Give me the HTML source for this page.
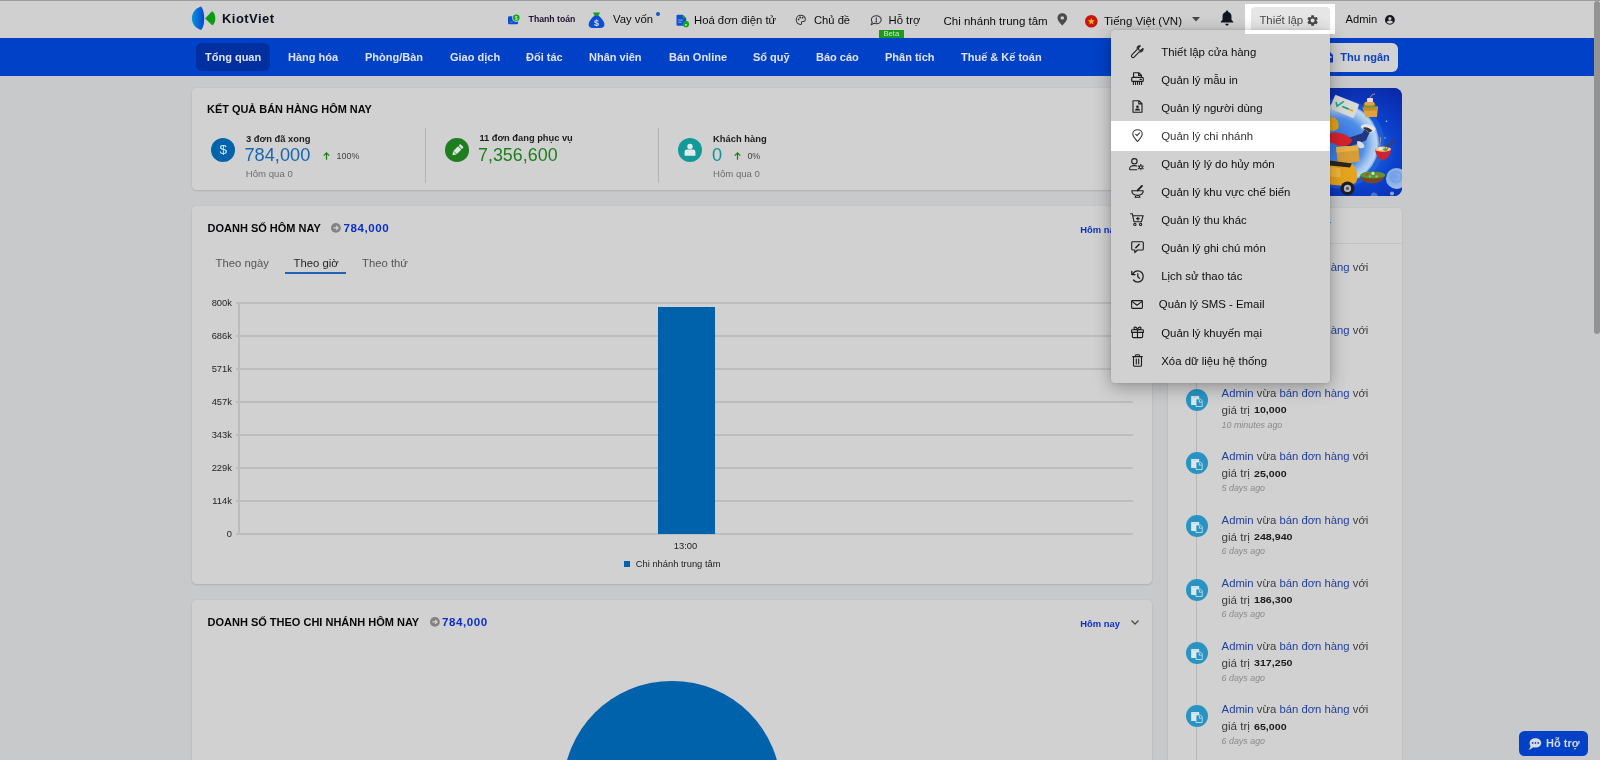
<!DOCTYPE html>
<html lang="vi">
<head>
<meta charset="utf-8">
<title>KiotViet - Tổng quan</title>
<style>
*{box-sizing:border-box;margin:0;padding:0}
html,body{width:1600px;height:760px;overflow:hidden}
body{position:relative;background:#c8c9cb;font-family:"Liberation Sans",sans-serif;color:#0c0c0e;font-size:12px}
.a{position:absolute}
.t{position:absolute;white-space:nowrap;line-height:1}
.b{font-weight:bold}
svg{position:absolute;overflow:visible}
/* header */
#topline{left:0;top:0;width:1600px;height:1px;background:#9c9c9c}
#header{left:0;top:1px;width:1600px;height:37px;background:#d0d0d0}
#nav{left:0;top:38px;width:1600px;height:38px;background:#0041c8}
#nav .t{color:#dfe3ee;font-weight:bold;font-size:11px;top:13.5px}
#navact{left:196px;top:5px;width:74px;height:28px;border-radius:6px;background:#002f9f}
.card{position:absolute;background:#d1d1d1;border-radius:4.5px;box-shadow:0 1px 2px rgba(0,0,0,.12),0 0 2px rgba(0,0,0,.07)}
.h{font-size:12px;color:#16181c}
</style>
</head>
<body>
<div id="root" style="position:absolute;left:0;top:0;width:1600px;height:760px;overflow:hidden;will-change:transform">
<div class="a" id="header"></div>
<div class="a" id="topline"></div>

<!-- header content -->
<svg style="left:191px;top:5px" width="26" height="27" viewBox="0 0 26 27">
  <defs><linearGradient id="lg" x1="0" y1="0" x2="1" y2="0"><stop offset="0" stop-color="#0b93d4"/><stop offset="1" stop-color="#0046d8"/></linearGradient></defs>
  <path d="M10.2 1.4 C12.6 5 13.2 9 13.2 13.4 C13.2 17.8 12.6 21.6 10.2 25 C4.6 23.4 0.9 19 0.9 13.2 C0.9 7.6 4.6 3 10.2 1.4Z" fill="url(#lg)"/>
  <path d="M14.1 13.5 L21 6.3 C22.4 6.6 24.3 9.6 24.3 13.4 C24.3 17 22.6 19.8 21.2 20.3 Z" fill="#0d9b12"/>
</svg>
<div class="t b" id="brand" style="left:222px;top:12px;font-size:13px;letter-spacing:0.45px;color:#0c1020">KiotViet</div>

<svg style="left:508px;top:13px" width="14" height="12" viewBox="0 0 14 12"><rect x="0" y="3.300" width="10.100" height="7.900" rx="1.200" fill="#0b4fd0"/><rect x="1.800" y="8.700" width="3" height="0.800" fill="#5f90e6"/><circle cx="8.300" cy="4.800" r="4.100" fill="#d0d0d0"/><circle cx="8.300" cy="4.800" r="3.250" fill="#12a516"/><text x="8.300" y="6.500" font-size="4.600" font-weight="bold" fill="#cfeccf" text-anchor="middle" font-family="Liberation Sans,sans-serif">$</text></svg>
<div class="t b" id="h1" style="left:528.600px;top:14.800px;font-size:8.7px;color:#1a1030">Thanh toán</div>

<svg style="left:588.400px;top:11.500px" width="17" height="17" viewBox="0 0 17 17"><path d="M5 0.500 H12 L10.300 3.800 H6.700 Z" fill="#0fa412"/><path d="M6.700 3.500 H10.300 C13.500 5.900 16.400 9.800 16.400 12.500 C16.400 14.800 15 15.900 12.400 15.900 H4.600 C2 15.900 0.600 14.800 0.600 12.500 C0.600 9.800 3.500 5.900 6.700 3.500Z" fill="#0b4ed4"/><text x="8.500" y="13.600" font-size="9" font-weight="bold" fill="#d9dfee" text-anchor="middle" font-family="Liberation Sans,sans-serif">$</text></svg>
<div class="t" id="h2" style="left:613px;top:13.5px;font-size:11.3px">Vay vốn</div>
<div class="a" style="left:656px;top:11.5px;width:4.4px;height:4.4px;border-radius:50%;background:#1457c8"></div>

<svg style="left:676px;top:14px" width="14" height="14" viewBox="0 0 14 14"><path d="M1.6 0.8 H6.6 L10.2 4.2 V10.6 Q10.2 11.8 9 11.8 H1.6 Q0.5 11.8 0.5 10.6 V2 Q0.5 0.8 1.6 0.8Z" fill="#0d50d4"/><path d="M6.6 0.8 L10.2 4.2 H6.6Z" fill="#12a812"/><rect x="2.2" y="5.6" width="4.6" height="1" fill="#8fb0ea"/><rect x="2.2" y="7.8" width="3.4" height="1" fill="#8fb0ea"/><circle cx="10" cy="10.2" r="3.1" fill="#14a51a"/><text x="10" y="12" font-size="4.4" font-weight="bold" fill="#d8f0d8" text-anchor="middle" font-family="Liberation Sans,sans-serif">e</text></svg>
<div class="t" id="h3" style="left:694px;top:14.5px;font-size:11.3px">Hoá đơn điện tử</div>

<svg style="left:795.3px;top:14.2px" width="11.6" height="11.6" viewBox="0 0 24 24" fill="none" stroke="#33363c" stroke-width="2.1" stroke-linecap="round"><path d="M12 2.5 C6.6 2.5 2.5 6.7 2.5 12 C2.5 17.3 6.6 21.5 11.6 21.5 C13.4 21.5 14.2 20.2 13.6 18.8 C12.8 16.9 13.9 15.4 15.8 15.4 H18 C20.2 15.4 21.5 13.8 21.5 11.6 C21.5 6.4 17.4 2.5 12 2.5Z"/><circle cx="7.4" cy="11.2" r="0.9" fill="#33363c"/><circle cx="10.6" cy="7.2" r="0.9" fill="#33363c"/><circle cx="15.6" cy="7.6" r="0.9" fill="#33363c"/></svg>
<div class="t" id="h4" style="left:814px;top:14.5px;font-size:11.2px">Chủ đề</div>

<svg style="left:870px;top:14.5px" width="12" height="11" viewBox="0 0 24 22" fill="none" stroke="#33363c" stroke-width="2.1" stroke-linecap="round" stroke-linejoin="round"><path d="M12.6 1.5 C18 1.5 22.4 5 22.4 9.6 C22.4 14.2 18 17.6 12.6 17.6 C10.8 17.6 9.2 17.3 7.8 16.7 L2.4 19.6 L4.6 14.6 C3.4 13.2 2.8 11.5 2.8 9.6 C2.8 5 7.2 1.5 12.6 1.5Z"/><path d="M12.6 5.6 V10.4"/><circle cx="12.6" cy="13.4" r="0.7" fill="#33363c"/></svg>
<div class="t" id="h5" style="left:888.5px;top:14.5px;font-size:11.3px">Hỗ trợ</div>
<div class="a" style="left:879px;top:30px;width:25px;height:8.5px;background:#1a9a1a"></div>
<div class="t" id="beta" style="left:883.5px;top:30.1px;font-size:7.6px;color:#d6ead6">Beta</div>

<div class="t" id="h6" style="left:943.5px;top:16.3px;font-size:11.5px">Chi nhánh trung tâm</div>
<svg style="left:1056.6px;top:12.6px" width="10.6" height="12.6" viewBox="0 0 20 24"><path d="M10 0.6 C4.8 0.6 0.8 4.4 0.8 9.4 C0.8 14.8 6 19.4 10 23.6 C14 19.4 19.2 14.8 19.2 9.4 C19.2 4.4 15.2 0.6 10 0.6Z M10 6 A3.3 3.3 0 1 1 10 12.6 A3.3 3.3 0 1 1 10 6Z" fill="#4b4b4b" fill-rule="evenodd"/></svg>

<svg style="left:1085px;top:14.6px" width="12.6" height="12.6" viewBox="0 0 24 24"><circle cx="12" cy="12" r="12" fill="#c8140f"/><path d="M12 5.2 L13.7 10 L18.8 10.1 L14.7 13.2 L16.2 18.1 L12 15.2 L7.8 18.1 L9.3 13.2 L5.2 10.1 L10.3 10Z" fill="#f2b90f"/></svg>
<div class="t" id="h7" style="left:1104px;top:16.3px;font-size:11.5px">Tiếng Việt (VN)</div>
<svg style="left:1191.5px;top:17px" width="8" height="4.4" viewBox="0 0 8 4.4"><path d="M0 0 H8 L4 4.4Z" fill="#474747"/></svg>

<svg style="left:1220px;top:9.6px" width="14" height="16.4" viewBox="0 0 28 33"><path d="M14 1 C12.6 1 11.6 2 11.6 3.3 V4 C7.6 5 5 8.4 5 12.6 V19.4 L1.4 23.6 V25.4 H26.6 V23.6 L23 19.4 V12.6 C23 8.4 20.4 5 16.4 4 V3.3 C16.4 2 15.4 1 14 1Z M10.6 27.6 C10.6 29.6 12 31.2 14 31.2 C16 31.2 17.4 29.6 17.4 27.6Z" fill="#0f1622"/></svg>

<!-- highlight -->
<div class="a" style="left:1245px;top:4px;width:90px;height:30px;background:#fff"></div>
<div class="a" style="left:1250.6px;top:7px;width:79.6px;height:23px;background:#e6e6e6;border-radius:4px 4px 0 0"></div>
<div class="t" id="h8" style="left:1259.4px;top:14.8px;font-size:11.4px;color:#484848">Thiết lập</div>
<svg style="left:1306.3px;top:13.7px" width="13.2" height="13.2" viewBox="0 0 24 24"><path fill="#484848" d="M19.14 12.94c.04-.3.06-.61.06-.94 0-.32-.02-.64-.07-.94l2.03-1.58a.49.49 0 0 0 .12-.61l-1.92-3.32a.488.488 0 0 0-.59-.22l-2.39.96c-.5-.38-1.030-.7-1.620-.94l-.36-2.540a.484.484 0 0 0-.48-.41h-3.840c-.24 0-.43.17-.47.41l-.36 2.540c-.59.24-1.130.57-1.620.94l-2.390-.96c-.22-.08-.47 0-.59.22L2.740 8.870c-.12.21-.08.47.12.61l2.030 1.580c-.05.300-.09.630-.09.940s.02.640.07.940l-2.030 1.580a.49.49 0 0 0-.12.610l1.920 3.320c.12.220.37.290.59.220l2.390-.96c.5.380 1.030.7 1.620.94l.36 2.540c.05.240.24.410.48.410h3.840c.24 0 .44-.17.47-.41l.36-2.540c.59-.24 1.130-.56 1.620-.94l2.390.96c.22.080.47 0 .59-.22l1.920-3.320c.12-.22.070-.47-.12-.61l-2.010-1.580zM12 15.600c-1.980 0-3.600-1.620-3.600-3.600s1.620-3.600 3.600-3.600 3.600 1.620 3.600 3.600-1.620 3.600-3.600 3.600z"/></svg>

<div class="t" id="h9" style="left:1345.6px;top:14px;font-size:11.2px">Admin</div>
<svg style="left:1385px;top:14.8px" width="9.8" height="9.8" viewBox="0 0 24 24"><path fill="#15181f" fill-rule="evenodd" d="M12 0 A12 12 0 1 0 12 24 A12 12 0 1 0 12 0Z M12 4.6 A3.9 3.9 0 1 1 12 12.4 A3.9 3.9 0 1 1 12 4.6Z M12 21.2 C8.8 21.2 6 19.6 4.4 17.1 C4.5 14.6 9.5 13.3 12 13.3 C14.5 13.3 19.5 14.6 19.6 17.1 C18 19.6 15.200 21.2 12 21.2Z"/></svg>

<div class="a" id="nav">
  <div class="a" id="navact"></div>
  <div class="t" style="left:205px">Tổng quan</div>
  <div class="t" style="left:288px">Hàng hóa</div>
  <div class="t" style="left:365px">Phòng/Bàn</div>
  <div class="t" style="left:450px">Giao dịch</div>
  <div class="t" style="left:526px">Đối tác</div>
  <div class="t" style="left:589px">Nhân viên</div>
  <div class="t" style="left:669px">Bán Online</div>
  <div class="t" style="left:753px">Sổ quỹ</div>
  <div class="t" style="left:816px">Báo cáo</div>
  <div class="t" style="left:885px">Phân tích</div>
  <div class="t" style="left:961px">Thuế &amp; Kế toán</div>
</div>

<!-- cards -->
<div class="card" id="kpi" style="left:192px;top:88px;width:960px;height:102px"></div>
<div class="card" id="chart" style="left:192px;top:206px;width:960px;height:378px"></div>
<div class="card" id="branch" style="left:192px;top:600px;width:960px;height:200px"></div>
<div class="card" id="act" style="left:1168px;top:208px;width:234px;height:600px"></div>


<!-- KPI card content -->
<div class="t b" id="k0" style="left:207px;top:103.6px;font-size:10.95px;color:#07070a">KẾT QUẢ BÁN HÀNG HÔM NAY</div>
<div class="a" style="left:211px;top:138px;width:24px;height:24px;border-radius:50%;background:#0063ac"></div>
<div class="t" style="left:219.400px;top:142.600px;font-size:13.600px;color:#dfe6ee">$</div>
<div class="t b" id="k1" style="left:246px;top:133.9px;font-size:9.4px;color:#1c1c1c">3 đơn đã xong</div>
<div class="t" id="k2" style="left:244.5px;top:146.1px;font-size:18.2px;color:#1766b3">784,000</div>
<svg style="left:323.4px;top:151.6px" width="7" height="8" viewBox="0 0 7 8" fill="none" stroke="#1a7f1a" stroke-width="1.250"><path d="M3.5 7.8 V1 M0.7 3.6 L3.5 0.8 L6.3 3.6"/></svg>
<div class="t" id="k3" style="left:336.6px;top:152.100px;font-size:8.9px;color:#3f3f3f">100%</div>
<div class="t" id="k4" style="left:245.8px;top:169.2px;font-size:9.6px;color:#6e6e6e">Hôm qua 0</div>
<div class="a" style="left:425px;top:127.5px;width:1px;height:55px;background:#b4b4b4"></div>

<div class="a" style="left:445px;top:138.200px;width:23.600px;height:23.600px;border-radius:50%;background:#1e7d1e"></div>
<svg style="left:449.600px;top:142.800px" width="14.600" height="14.600" viewBox="0 0 13 13"><g transform="rotate(45 6.5 6.5)"><rect x="4.4" y="0.6" width="4.2" height="2.2" rx="0.8" fill="#dfe9df"/><rect x="4.4" y="3.5" width="4.2" height="5.6" fill="#dfe9df"/><path d="M4.4 9.6 H8.6 L6.5 12.6Z" fill="#dfe9df"/></g></svg>
<div class="t b" id="k5" style="left:479.4px;top:134.4px;font-size:9.3px;color:#1c1c1c">11 đơn đang phục vụ</div>
<div class="t" id="k6" style="left:478px;top:147px;font-size:17.9px;color:#1e7e1e">7,356,600</div>
<div class="a" style="left:658.3px;top:127.5px;width:1px;height:55px;background:#b4b4b4"></div>

<div class="a" style="left:678px;top:138px;width:24px;height:24px;border-radius:50%;background:#149999"></div>
<svg style="left:684px;top:143.400px" width="12" height="13.500" viewBox="0 0 12 13.500"><circle cx="6" cy="3.400" r="2.700" fill="#e2ecec"/><path d="M0.600 12.800 V9 Q0.600 6.600 3 6.600 H9 Q11.400 6.600 11.400 9 V12.800Z" fill="#e2ecec"/></svg>
<div class="t b" id="k7" style="left:713px;top:133.9px;font-size:9.4px;color:#1c1c1c">Khách hàng</div>
<div class="t" id="k8" style="left:712px;top:146px;font-size:18.2px;color:#119292">0</div>
<svg style="left:734px;top:151.6px" width="7" height="8" viewBox="0 0 7 8" fill="none" stroke="#1a7f1a" stroke-width="1.250"><path d="M3.5 7.8 V1 M0.7 3.6 L3.5 0.8 L6.3 3.6"/></svg>
<div class="t" id="k9" style="left:747.4px;top:152.100px;font-size:8.9px;color:#3f3f3f">0%</div>
<div class="t" id="k10" style="left:713px;top:169.2px;font-size:9.6px;color:#6e6e6e">Hôm qua 0</div>


<!-- chart card content -->
<style>.gl{left:236px;width:897px;height:2px;background:#bdbdbd}.cl{font-size:9.35px;color:#1e1e1e}</style>
<div class="t b" id="c0" style="left:207.5px;top:223px;font-size:11px;color:#07070a">DOANH SỐ HÔM NAY</div>
<svg class="ci" style="left:331.3px;top:222.700px" width="9.800" height="9.800" viewBox="0 0 20 20"><circle cx="10" cy="10" r="10" fill="#828282"/><path d="M5 10 H14 M10.400 5.800 L14.600 10 L10.400 14.200" fill="none" stroke="#d6d6d6" stroke-width="2.400"/></svg>
<div class="t b" id="c1" style="left:343.6px;top:222.2px;font-size:11.6px;letter-spacing:0.55px;color:#0b2fc8">784,000</div>
<div class="t b" id="c2" style="left:1080.3px;top:225px;font-size:9.4px;color:#0b2fc8">Hôm nay</div>
<div class="t" id="c3" style="left:215.6px;top:257.8px;font-size:11.3px;color:#555">Theo ngày</div>
<div class="t" id="c4" style="left:293.6px;top:257.8px;font-size:11.3px;color:#262626">Theo giờ</div>
<div class="t" id="c5" style="left:362px;top:257.8px;font-size:11.3px;color:#555">Theo thứ</div>
<div class="a" style="left:285px;top:272.4px;width:60.800px;height:1.400px;background:#1f63b5"></div>
<div class="a gl" style="top:302px"></div>
<div class="t cl" style="right:1368.1px;top:298.5px">800k</div>
<div class="a gl" style="top:335px"></div>
<div class="t cl" style="right:1368.1px;top:331.5px">686k</div>
<div class="a gl" style="top:368px"></div>
<div class="t cl" style="right:1368.1px;top:364.5px">571k</div>
<div class="a gl" style="top:401px"></div>
<div class="t cl" style="right:1368.1px;top:397.5px">457k</div>
<div class="a gl" style="top:434px"></div>
<div class="t cl" style="right:1368.1px;top:430.5px">343k</div>
<div class="a gl" style="top:467px"></div>
<div class="t cl" style="right:1368.1px;top:463.5px">229k</div>
<div class="a gl" style="top:500px"></div>
<div class="t cl" style="right:1368.1px;top:496.5px">114k</div>
<div class="a gl" style="top:533px"></div>
<div class="t cl" style="right:1368.1px;top:529.5px">0</div>

<div class="a" style="left:238px;top:302px;width:2px;height:233px;background:#bcbcbc"></div>
<div class="a" style="left:657.7px;top:306.600px;width:57.300px;height:227.400px;background:#0062ab"></div>
<div class="t cl" id="c6" style="left:673.8px;top:542.4px">13:00</div>
<div class="a" style="left:624px;top:561px;width:6.300px;height:6.300px;background:#0062ab"></div>
<div class="t cl" id="c7" style="left:635.8px;top:559.6px">Chi nhánh trung tâm</div>

<!-- branch card content -->
<div class="t b" id="b0" style="left:207.5px;top:616.700px;font-size:11px;color:#07070a">DOANH SỐ THEO CHI NHÁNH HÔM NAY</div>
<svg class="ci" style="left:429.900px;top:617px" width="9.800" height="9.800" viewBox="0 0 20 20"><circle cx="10" cy="10" r="10" fill="#828282"/><path d="M5 10 H14 M10.400 5.800 L14.600 10 L10.400 14.200" fill="none" stroke="#d6d6d6" stroke-width="2.400"/></svg>
<div class="t b" id="b1" style="left:441.9px;top:616.2px;font-size:11.6px;letter-spacing:0.55px;color:#0b2fc8">784,000</div>
<div class="t b" id="b2" style="left:1080.3px;top:619.200px;font-size:9.4px;color:#0b2fc8">Hôm nay</div>
<svg style="left:1131px;top:619.600px" width="8" height="5" viewBox="0 0 8 5" fill="none" stroke="#4a4a4a" stroke-width="1.300"><path d="M0.500 0.500 L4 4 L7.500 0.500"/></svg>
<div class="a" style="left:563.4px;top:680.6px;width:217.800px;height:217.800px;border-radius:50%;background:#0062ab"></div>


<!-- right column -->
<style>
.ac{left:1185.800px;width:22px;height:22px;border-radius:50%;background:#2994c4;margin-top:-0.2px}
.l1{left:1221.600px;font-size:11.3px;color:#3c3c3c}
.l2{left:1221.600px;font-size:11.6px;color:#3c3c3c}
.l2 b{position:absolute;left:32.2px;top:2.3px;font-size:9.1px;color:#1c1c1c;display:block;transform:scaleX(1.17);transform-origin:0 0}
.l3{left:1221.600px;font-size:8.9px;font-style:italic;color:#8a8a8a}
.lk{color:#223f9c}
.dd{font-size:11.4px}
</style>
<div class="a" id="banner" style="left:1168px;top:87.600px;width:234.400px;height:108.200px;border-radius:8px;overflow:hidden;background:#0a3ecb">
<svg style="left:0;top:0" width="234.4" height="108.2" viewBox="1168 87.6 234.4 108.2">
<defs>
<radialGradient id="bg1" cx="1362" cy="150" r="70" gradientUnits="userSpaceOnUse"><stop offset="0" stop-color="#2a74dc"/><stop offset="0.5" stop-color="#0b40cc"/><stop offset="1" stop-color="#0a29a6"/></radialGradient>
<radialGradient id="moon" cx="1339" cy="143" r="40" gradientUnits="userSpaceOnUse"><stop offset="0" stop-color="#2a6ee0"/><stop offset="0.62" stop-color="#4d8ce6"/><stop offset="0.84" stop-color="#a4c6f0"/><stop offset="0.94" stop-color="#bcd6f4"/><stop offset="1" stop-color="#6f9fe8"/></radialGradient>
<radialGradient id="bub" cx="0.4" cy="0.4" r="0.7"><stop offset="0" stop-color="#7fb0ee"/><stop offset="1" stop-color="#c4dcf6"/></radialGradient>
</defs>
<rect x="1168" y="87.600" width="234.400" height="108.200" fill="url(#bg1)"/>
<circle cx="1339" cy="143" r="45" fill="#2f74e0" opacity="0.4"/><circle cx="1339" cy="143" r="40" fill="url(#moon)"/>

<g transform="rotate(22 1344.500 106)"><rect x="1331.500" y="98.500" width="26" height="15" rx="1.500" fill="#d9d9d6"/><path d="M1335 105 L1337.500 108.500 L1342 101.500" stroke="#18a890" stroke-width="1.600" fill="none"/><rect x="1342.500" y="106" width="7" height="1.800" fill="#17a27a"/><rect x="1350" y="106" width="4" height="1.800" fill="#e2a81c"/></g>
<path d="M1362.500 107 L1378 106 L1377 116.500 L1365.500 116.500Z" fill="#e2a03a"/>
<path d="M1362.500 107 L1378 106 L1376.500 110 L1364 110.500Z" fill="#c98a2c"/>
<ellipse cx="1369.500" cy="104.500" rx="6" ry="3.200" fill="#c8742a"/><ellipse cx="1369.500" cy="105.800" rx="5.800" ry="1.300" fill="#5aa83a"/><ellipse cx="1369.500" cy="103" rx="5" ry="2.200" fill="#e2a24a"/>
<rect x="1367" y="97.500" width="6" height="4.200" rx="1" fill="#e6dcd8"/><path d="M1370 97.500 L1372.500 94 L1375 93.600" stroke="#e8a0a0" stroke-width="0.800" fill="none"/>
<path d="M1343 139 L1362 133 L1366 127 L1370.500 130 L1366 140 L1347 147Z" fill="#23357e"/>
<path d="M1361 125.500 C1364 122 1373 124.500 1375.500 128 C1375 131.500 1371 133 1368 131.500 C1366 129 1363 128.500 1361 127.500Z" fill="#e4e4e6"/>
<path d="M1363.500 127 C1366 126 1370.500 128 1372.500 130.500 L1369 132 C1367 130 1365 129 1363.500 128.500Z" fill="#33343c"/>
<path d="M1357 141 C1361 140 1364 143 1364.500 146.500 C1362 148.500 1359 148 1357.500 146Z" fill="#dcdcde"/>
<path d="M1330 133 C1338 130 1348 135 1352 139 C1352 144 1346 146.500 1340 145.500 L1330 142Z" fill="#d4222c"/>
<path d="M1330 117 C1336 116 1339.500 121 1338.500 127 C1337 130 1333 131 1330 130Z" fill="#e0a21a"/>
<path d="M1336 146.500 L1358 145 L1360 161 L1338 164Z" fill="#d79c36"/>
<path d="M1336 146.500 L1358 145 L1358.500 150 L1336.500 152Z" fill="#e6b04a"/>
<path d="M1330 160 L1352 163 C1357 168 1358.500 176 1356 182 L1349 186 L1330 184Z" fill="#e5a41c"/>
<path d="M1330 160 L1352 163 L1350 167 L1330 165Z" fill="#2a2620"/>
<path d="M1330 166 L1340 168 L1341 177 L1330 176Z" fill="#f0b83a"/>
<circle cx="1347.500" cy="188" r="7" fill="#1e1e22"/><circle cx="1347.500" cy="188" r="3.600" fill="#b8b8bc"/><circle cx="1347.500" cy="188" r="1.600" fill="#55555a"/>
<path d="M1375 148.500 C1378 146 1388 146.500 1391 150 C1390 156 1386 159.500 1382.500 159.500 C1378.500 158.500 1375.500 154 1375 148.500Z" fill="#cc2430"/>
<ellipse cx="1383" cy="148.800" rx="8" ry="2.600" fill="#e8c890"/><ellipse cx="1380.500" cy="148" rx="2.200" ry="1.500" fill="#f0e8d0"/><ellipse cx="1385.500" cy="149.200" rx="2.400" ry="1.300" fill="#5a9a3a"/>
<path d="M1385 147 L1394 139 M1387 148 L1395.500 141" stroke="#5a3626" stroke-width="1" fill="none"/>
<path d="M1380 146 C1379 142 1381.500 139.500 1380 136.500" stroke="#d8a868" stroke-width="0.900" fill="none"/>
<path d="M1360 175.500 C1366 172 1380 171 1385.500 174 C1384 180 1378 183 1372 183 C1366 183 1361.500 180 1360 175.500Z" fill="#7a4426"/>
<ellipse cx="1372.800" cy="174.600" rx="12.400" ry="3.600" fill="#4e9a34"/><circle cx="1367" cy="174" r="1.500" fill="#d8402a"/><circle cx="1373" cy="173" r="1.600" fill="#e8d8b0"/><circle cx="1379" cy="174.500" r="1.500" fill="#d85a2a"/><circle cx="1370" cy="176" r="1.200" fill="#8ac84a"/><circle cx="1376.500" cy="176" r="1.200" fill="#9ad05a"/>
<circle cx="1396.500" cy="178" r="10.500" fill="url(#bub)" opacity="0.85"/><circle cx="1396" cy="176.500" r="5.500" fill="none" stroke="#6a9ee6" stroke-width="1.400" opacity="0.8"/>
<circle cx="1392" cy="193" r="2" fill="#a8c4ee" opacity="0.8"/><circle cx="1374" cy="195.500" r="3.500" fill="#7faaea" opacity="0.5"/><circle cx="1386.500" cy="120.800" r="0.800" fill="#b8d0f4"/><circle cx="1385" cy="137.500" r="0.700" fill="#b8d0f4"/>
</svg>
</div>
<div class="t b" id="r0" style="left:1183px;top:220.500px;font-size:10.400px;color:#07070a">CÁC HOẠT ĐỘNG GẦN ĐÂY</div>
<div class="a" style="left:1330px;top:221.800px;width:1px;height:1.500px;background:#3f82c6"></div>
<div class="a" style="left:1168px;top:243px;width:234px;height:1px;background:#c2c2c2"></div>
<div class="a" style="left:1196.300px;top:262px;width:1px;height:520px;background:#b6b6b6"></div>
<div class="a ac" style="top:262.4px"></div><svg style="left:1189.750px;top:266.2px" width="14" height="14" viewBox="-7 -7 14 14"><rect x="-5.850" y="-4" width="8" height="9" rx="0.500" fill="#dde8ee"/><rect x="-4.600" y="-3.200" width="5.500" height="0.700" fill="#a9cfe2"/><path d="M-1 -1 H3.400 L5.200 0.800 V6.500 H-1Z" fill="#2994c4" stroke="#e4edf2" stroke-width="0.750"/><path d="M2.300 0 V2.200 H4.500" fill="none" stroke="#e4edf2" stroke-width="0.750"/></svg>
<div class="t l1" style="top:261.5px"><span class="lk">Admin</span> vừa <span class="lk">bán đơn hàng</span> với</div>
<div class="t l2" style="top:277.6px">giá trị <b>52,000</b></div>
<div class="t l3" style="top:294.1px">2 minutes ago</div>
<div class="a ac" style="top:325.6px"></div><svg style="left:1189.750px;top:329.4px" width="14" height="14" viewBox="-7 -7 14 14"><rect x="-5.850" y="-4" width="8" height="9" rx="0.500" fill="#dde8ee"/><rect x="-4.600" y="-3.200" width="5.500" height="0.700" fill="#a9cfe2"/><path d="M-1 -1 H3.400 L5.200 0.800 V6.500 H-1Z" fill="#2994c4" stroke="#e4edf2" stroke-width="0.750"/><path d="M2.300 0 V2.200 H4.500" fill="none" stroke="#e4edf2" stroke-width="0.750"/></svg>
<div class="t l1" style="top:324.8px"><span class="lk">Admin</span> vừa <span class="lk">bán đơn hàng</span> với</div>
<div class="t l2" style="top:340.8px">giá trị <b>18,000</b></div>
<div class="t l3" style="top:357.3px">6 minutes ago</div>
<div class="a ac" style="top:388.9px"></div><svg style="left:1189.750px;top:392.8px" width="14" height="14" viewBox="-7 -7 14 14"><rect x="-5.850" y="-4" width="8" height="9" rx="0.500" fill="#dde8ee"/><rect x="-4.600" y="-3.200" width="5.500" height="0.700" fill="#a9cfe2"/><path d="M-1 -1 H3.400 L5.200 0.800 V6.500 H-1Z" fill="#2994c4" stroke="#e4edf2" stroke-width="0.750"/><path d="M2.300 0 V2.200 H4.500" fill="none" stroke="#e4edf2" stroke-width="0.750"/></svg>
<div class="t l1" style="top:388.0px"><span class="lk">Admin</span> vừa <span class="lk">bán đơn hàng</span> với</div>
<div class="t l2" style="top:404.1px">giá trị <b>10,000</b></div>
<div class="t l3" style="top:420.6px">10 minutes ago</div>
<div class="a ac" style="top:452.1px"></div><svg style="left:1189.750px;top:455.9px" width="14" height="14" viewBox="-7 -7 14 14"><rect x="-5.850" y="-4" width="8" height="9" rx="0.500" fill="#dde8ee"/><rect x="-4.600" y="-3.200" width="5.500" height="0.700" fill="#a9cfe2"/><path d="M-1 -1 H3.400 L5.200 0.800 V6.500 H-1Z" fill="#2994c4" stroke="#e4edf2" stroke-width="0.750"/><path d="M2.300 0 V2.200 H4.500" fill="none" stroke="#e4edf2" stroke-width="0.750"/></svg>
<div class="t l1" style="top:451.3px"><span class="lk">Admin</span> vừa <span class="lk">bán đơn hàng</span> với</div>
<div class="t l2" style="top:467.3px">giá trị <b>25,000</b></div>
<div class="t l3" style="top:483.8px">5 days ago</div>
<div class="a ac" style="top:515.4px"></div><svg style="left:1189.750px;top:519.2px" width="14" height="14" viewBox="-7 -7 14 14"><rect x="-5.850" y="-4" width="8" height="9" rx="0.500" fill="#dde8ee"/><rect x="-4.600" y="-3.200" width="5.500" height="0.700" fill="#a9cfe2"/><path d="M-1 -1 H3.400 L5.200 0.800 V6.500 H-1Z" fill="#2994c4" stroke="#e4edf2" stroke-width="0.750"/><path d="M2.300 0 V2.200 H4.500" fill="none" stroke="#e4edf2" stroke-width="0.750"/></svg>
<div class="t l1" style="top:514.5px"><span class="lk">Admin</span> vừa <span class="lk">bán đơn hàng</span> với</div>
<div class="t l2" style="top:530.6px">giá trị <b>248,940</b></div>
<div class="t l3" style="top:547.1px">6 days ago</div>
<div class="a ac" style="top:578.7px"></div><svg style="left:1189.750px;top:582.5px" width="14" height="14" viewBox="-7 -7 14 14"><rect x="-5.850" y="-4" width="8" height="9" rx="0.500" fill="#dde8ee"/><rect x="-4.600" y="-3.200" width="5.500" height="0.700" fill="#a9cfe2"/><path d="M-1 -1 H3.400 L5.200 0.800 V6.500 H-1Z" fill="#2994c4" stroke="#e4edf2" stroke-width="0.750"/><path d="M2.300 0 V2.200 H4.500" fill="none" stroke="#e4edf2" stroke-width="0.750"/></svg>
<div class="t l1" style="top:577.8px"><span class="lk">Admin</span> vừa <span class="lk">bán đơn hàng</span> với</div>
<div class="t l2" style="top:593.9px">giá trị <b>186,300</b></div>
<div class="t l3" style="top:610.4px">6 days ago</div>
<div class="a ac" style="top:641.9px"></div><svg style="left:1189.750px;top:645.8px" width="14" height="14" viewBox="-7 -7 14 14"><rect x="-5.850" y="-4" width="8" height="9" rx="0.500" fill="#dde8ee"/><rect x="-4.600" y="-3.200" width="5.500" height="0.700" fill="#a9cfe2"/><path d="M-1 -1 H3.400 L5.200 0.800 V6.500 H-1Z" fill="#2994c4" stroke="#e4edf2" stroke-width="0.750"/><path d="M2.300 0 V2.200 H4.500" fill="none" stroke="#e4edf2" stroke-width="0.750"/></svg>
<div class="t l1" style="top:641.0px"><span class="lk">Admin</span> vừa <span class="lk">bán đơn hàng</span> với</div>
<div class="t l2" style="top:657.1px">giá trị <b>317,250</b></div>
<div class="t l3" style="top:673.6px">6 days ago</div>
<div class="a ac" style="top:705.2px"></div><svg style="left:1189.750px;top:709.0px" width="14" height="14" viewBox="-7 -7 14 14"><rect x="-5.850" y="-4" width="8" height="9" rx="0.500" fill="#dde8ee"/><rect x="-4.600" y="-3.200" width="5.500" height="0.700" fill="#a9cfe2"/><path d="M-1 -1 H3.400 L5.200 0.800 V6.500 H-1Z" fill="#2994c4" stroke="#e4edf2" stroke-width="0.750"/><path d="M2.300 0 V2.200 H4.500" fill="none" stroke="#e4edf2" stroke-width="0.750"/></svg>
<div class="t l1" style="top:704.3px"><span class="lk">Admin</span> vừa <span class="lk">bán đơn hàng</span> với</div>
<div class="t l2" style="top:720.4px">giá trị <b>65,000</b></div>
<div class="t l3" style="top:736.9px">6 days ago</div>



<!-- Thu ngan button (under dropdown) -->
<div class="a" id="thungan" style="left:1316px;top:42.500px;width:82.300px;height:29.300px;border-radius:6px;background:#d2d2d2"></div>
<svg style="left:1323px;top:51px" width="11" height="12" viewBox="0 0 11 12"><path d="M1 11.500 V3 Q1 1 3 1 H7 L10 4 V11.500Z" fill="#0b3fc4"/><rect x="3" y="5" width="2" height="2" fill="#d2d2d2"/><rect x="6.500" y="5" width="2" height="2" fill="#d2d2d2"/></svg>
<div class="t b" id="tn" style="left:1340.300px;top:51.600px;font-size:11px;color:#0b3fc4">Thu ngân</div>
<!-- scrollbar -->
<div class="a" style="left:1593.800px;top:0.500px;width:6.600px;height:333px;border-radius:3.300px;background:#939393"></div>
<!-- support button -->
<div class="a" style="left:1519px;top:730.700px;width:68.600px;height:25px;border-radius:5.500px;background:#0041c8"></div>
<svg style="left:1527.600px;top:737.800px" width="13.600" height="12" viewBox="0 0 26 23.600"><path d="M14.200 0.400 C20.600 0.400 25.600 4.400 25.600 9.600 C25.600 14.800 20.600 18.800 14.200 18.800 C12.600 18.800 11.100 18.550 9.700 18.100 C7.600 20.200 4.200 22.600 0.900 23 C2.900 20.800 4.100 18.200 4.600 15.700 C3.400 13.900 2.800 11.800 2.800 9.600 C2.800 4.400 7.800 0.400 14.200 0.400Z" fill="#d8dade"/><circle cx="8.600" cy="9.800" r="1.700" fill="#0041c8"/><circle cx="14.200" cy="9.800" r="1.700" fill="#0041c8"/><circle cx="19.800" cy="9.800" r="1.700" fill="#0041c8"/></svg>
<div class="t b" id="sup" style="left:1546px;top:738.300px;font-size:11px;color:#d8dade">Hỗ trợ</div>

<!-- dropdown -->
<div class="a" id="ddbox" style="left:1111.250px;top:30px;width:218.750px;height:352.500px;border-radius:4px;background:#d1d1d1;box-shadow:0 4px 18px rgba(0,0,0,.32),0 0 3px rgba(0,0,0,.14)"></div>
<div class="a" style="left:1245px;top:29.800px;width:90px;height:4.200px;background:#fff"></div>
<div class="a" id="ddhl" style="left:1111.250px;top:121.200px;width:218.750px;height:29.600px;background:#fff"></div>
<svg style="left:1131.0px;top:44.5px" width="13" height="13" viewBox="0 0 13 13"><path d="M9.300 0.900 C7.300 0.500 5.600 2.200 6.200 4.400 L0.900 9.900 C0.300 10.600 0.300 11.500 0.900 12.100 C1.500 12.700 2.400 12.700 3.100 12.100 L8.500 6.700 C10.600 7.400 12.500 5.600 12 3.500 L9.900 5.500 L7.900 5 L7.400 3 Z" fill="none" stroke="#1c1c1c" stroke-width="1.100" stroke-linecap="round" stroke-linejoin="round"/></svg>
<div class="t dd" id="d0" style="left:1161.25px;top:46.5px;color:#0c0c0c">Thiết lập cửa hàng</div>
<svg style="left:1131.2px;top:72.0px" width="13" height="13" viewBox="0 0 13 13"><path d="M2.600 5.400 V0.700 H7.800 L10.400 3.200 V5.400 M7.600 0.900 V3.400 H10.200" fill="none" stroke="#1c1c1c" stroke-width="1.100" stroke-linecap="round" stroke-linejoin="round"/><rect x="0.700" y="5.400" width="11.600" height="4" rx="1" fill="none" stroke="#1c1c1c" stroke-width="1.100" stroke-linecap="round" stroke-linejoin="round"/><path d="M9 7.400 H10.400 M2.400 9.600 V12.400 M4.500 9.600 V12.400 M6.500 9.600 V12.400 M8.500 9.600 V12.400 M10.600 9.600 V12.400" fill="none" stroke="#1c1c1c" stroke-width="1.100" stroke-linecap="round" stroke-linejoin="round"/></svg>
<div class="t dd" id="d1" style="left:1161.25px;top:74.6px;color:#0c0c0c">Quản lý mẫu in</div>
<svg style="left:1131.1px;top:100.2px" width="13" height="13" viewBox="0 0 13 13"><path d="M2 0.700 H8 L11 3.700 V12.300 H2 Z M7.800 0.900 V3.900 H10.800" fill="none" stroke="#1c1c1c" stroke-width="1.100" stroke-linecap="round" stroke-linejoin="round"/><circle cx="6.500" cy="6.700" r="1.300" fill="#1c1c1c"/><path d="M4 10.400 C4 8.800 5 8.400 6.500 8.400 C8 8.400 9 8.800 9 10.400Z" fill="#1c1c1c"/></svg>
<div class="t dd" id="d2" style="left:1161.25px;top:102.8px;color:#0c0c0c">Quản lý người dùng</div>
<svg style="left:1131.1px;top:128.6px" width="13" height="13" viewBox="0 0 13 13"><path d="M6.500 12.500 C4.500 10 1.800 7.800 1.800 5 C1.800 2.500 3.900 0.700 6.500 0.700 C9.100 0.700 11.200 2.500 11.200 5 C11.200 7.800 8.500 10 6.500 12.500Z M4.600 5.200 L6 6.600 L8.600 3.900" fill="none" stroke="#343434" stroke-width="1.050" stroke-linecap="round" stroke-linejoin="round"/></svg>
<div class="t dd" id="d3" style="left:1161.25px;top:130.9px;color:#303030">Quản lý chi nhánh</div>
<svg style="left:1129.4px;top:157.8px" width="16" height="13" viewBox="0 0 16 13"><circle cx="5.400" cy="3.300" r="2.700" fill="none" stroke="#1c1c1c" stroke-width="1.100" stroke-linecap="round" stroke-linejoin="round"/><path d="M7.800 11.800 H1.400 C0.800 11.800 0.600 11.400 0.600 10.800 C0.600 8.600 2.600 7.600 5.400 7.600 C6.400 7.600 7.200 7.700 7.900 8" fill="none" stroke="#1c1c1c" stroke-width="1.100" stroke-linecap="round" stroke-linejoin="round"/><circle cx="11.800" cy="9.300" r="1.500" fill="none" stroke="#1c1c1c" stroke-width="1.100" stroke-linecap="round" stroke-linejoin="round"/><path d="M11.800 6.300 V7.200 M11.800 11.400 V12.300 M14.400 7.800 L13.600 8.250 M10 10.350 L9.200 10.800 M14.400 10.800 L13.600 10.350 M10 8.250 L9.200 7.800" stroke="#1c1c1c" stroke-width="1.500" fill="none"/></svg>
<div class="t dd" id="d4" style="left:1161.25px;top:159.0px;color:#0c0c0c">Quản lý lý do hủy món</div>
<svg style="left:1131.2px;top:184.6px" width="13" height="13" viewBox="0 0 13 13"><path d="M0.800 5.800 H12.200 C12.200 8.600 10 10.400 6.500 10.400 C3 10.400 0.800 8.600 0.800 5.800Z M4 12.300 H9 M4.800 10.300 L4.200 12.200 M8.200 10.300 L8.800 12.200" fill="none" stroke="#1c1c1c" stroke-width="1.100" stroke-linecap="round" stroke-linejoin="round"/><path d="M6.600 5.400 L11 0.900" stroke="#1c1c1c" stroke-width="1.900" stroke-linecap="round" fill="none"/></svg>
<div class="t dd" id="d5" style="left:1161.25px;top:187.1px;color:#0c0c0c">Quản lý khu vực chế biến</div>
<svg style="left:1130.4px;top:212.8px" width="14" height="13" viewBox="0 0 14 13"><path d="M0.600 0.700 H2.300 L4 8.700 H11.400 L13.200 2.700 H2.900" fill="none" stroke="#1c1c1c" stroke-width="1.100" stroke-linecap="round" stroke-linejoin="round"/><circle cx="4.900" cy="11.400" r="1.150" fill="none" stroke="#1c1c1c" stroke-width="1.100" stroke-linecap="round" stroke-linejoin="round"/><circle cx="10.600" cy="11.400" r="1.150" fill="none" stroke="#1c1c1c" stroke-width="1.100" stroke-linecap="round" stroke-linejoin="round"/><path d="M7.900 4.300 V7 M6.600 5.650 H9.200" fill="none" stroke="#1c1c1c" stroke-width="1.100" stroke-linecap="round" stroke-linejoin="round"/></svg>
<div class="t dd" id="d6" style="left:1161.25px;top:215.2px;color:#0c0c0c">Quản lý thu khác</div>
<svg style="left:1131.2px;top:241.4px" width="13" height="12.5" viewBox="0 0 13 12.5"><path d="M1.700 0.700 H11.300 C11.900 0.700 12.300 1.100 12.300 1.700 V8 C12.300 8.600 11.900 9 11.300 9 H6.400 L3.800 11.600 V9 H1.700 C1.100 9 0.700 8.600 0.700 8 V1.700 C0.700 1.100 1.100 0.700 1.700 0.700Z" fill="none" stroke="#1c1c1c" stroke-width="1.100" stroke-linecap="round" stroke-linejoin="round"/><path d="M4.800 6.800 L8.200 3.200" stroke="#1c1c1c" stroke-width="1.500" stroke-linecap="round" fill="none"/></svg>
<div class="t dd" id="d7" style="left:1161.25px;top:243.3px;color:#0c0c0c">Quản lý ghi chú món</div>
<svg style="left:1131.0px;top:269.6px" width="13" height="13" viewBox="0 0 13 13"><path d="M1.800 4.300 C2.800 2.100 4.500 0.900 6.800 0.900 C9.800 0.900 12.200 3.400 12.200 6.500 C12.200 9.600 9.800 12.100 6.800 12.100 C5 12.100 3.500 11.300 2.500 10 M0.800 1.300 V4.600 H4.100 M6.800 3.800 V6.800 L8.600 8.400" fill="none" stroke="#1c1c1c" stroke-width="1.250" stroke-linecap="round" stroke-linejoin="round"/></svg>
<div class="t dd" id="d8" style="left:1161.25px;top:271.4px;color:#0c0c0c">Lịch sử thao tác</div>
<svg style="left:1131.0px;top:299.6px" width="12" height="9" viewBox="0 0 12 9"><rect x="0.600" y="0.600" width="10.800" height="7.800" rx="0.800" fill="none" stroke="#1c1c1c" stroke-width="1.100" stroke-linecap="round" stroke-linejoin="round"/><path d="M0.900 1.400 L6 5.200 L11.100 1.400" fill="none" stroke="#1c1c1c" stroke-width="1.100" stroke-linecap="round" stroke-linejoin="round"/></svg>
<div class="t dd" id="d9" style="left:1158.80px;top:299.4px;color:#0c0c0c">Quản lý SMS - Email</div>
<svg style="left:1131.2px;top:325.7px" width="13" height="12.5" viewBox="0 0 13 12.5"><path d="M1.200 3.800 H11.800 C12.200 3.800 12.400 4 12.400 4.400 V6.400 H0.600 V4.400 C0.600 4 0.800 3.800 1.200 3.800Z M1.400 6.400 H11.600 V10.800 C11.600 11.300 11.300 11.600 10.800 11.600 H2.200 C1.700 11.600 1.400 11.300 1.400 10.800Z M6.500 3.800 V11.600 M6.500 3.600 C5.500 0.400 2.600 0.600 3 2.400 C3.300 3.400 5 3.700 6.500 3.700 C8 3.700 9.700 3.400 10 2.400 C10.400 0.600 7.500 0.400 6.500 3.600Z" fill="none" stroke="#1c1c1c" stroke-width="1.100" stroke-linecap="round" stroke-linejoin="round"/></svg>
<div class="t dd" id="d10" style="left:1161.25px;top:327.6px;color:#0c0c0c">Quản lý khuyến mại</div>
<svg style="left:1132.0px;top:353.8px" width="11" height="13" viewBox="0 0 11 13"><path d="M0.700 2.600 H10.300 M3.600 2.400 V1.200 C3.600 0.900 3.800 0.700 4.100 0.700 H6.900 C7.200 0.700 7.400 0.900 7.400 1.200 V2.400 M1.500 2.800 V11.300 C1.500 11.900 1.900 12.300 2.500 12.300 H8.500 C9.100 12.300 9.500 11.900 9.500 11.300 V2.800 M4.300 5 V10 M6.700 5 V10" fill="none" stroke="#1c1c1c" stroke-width="1.100" stroke-linecap="round" stroke-linejoin="round"/></svg>
<div class="t dd" id="d11" style="left:1161.25px;top:355.7px;color:#0c0c0c">Xóa dữ liệu hệ thống</div>

</div>
</body>
</html>
